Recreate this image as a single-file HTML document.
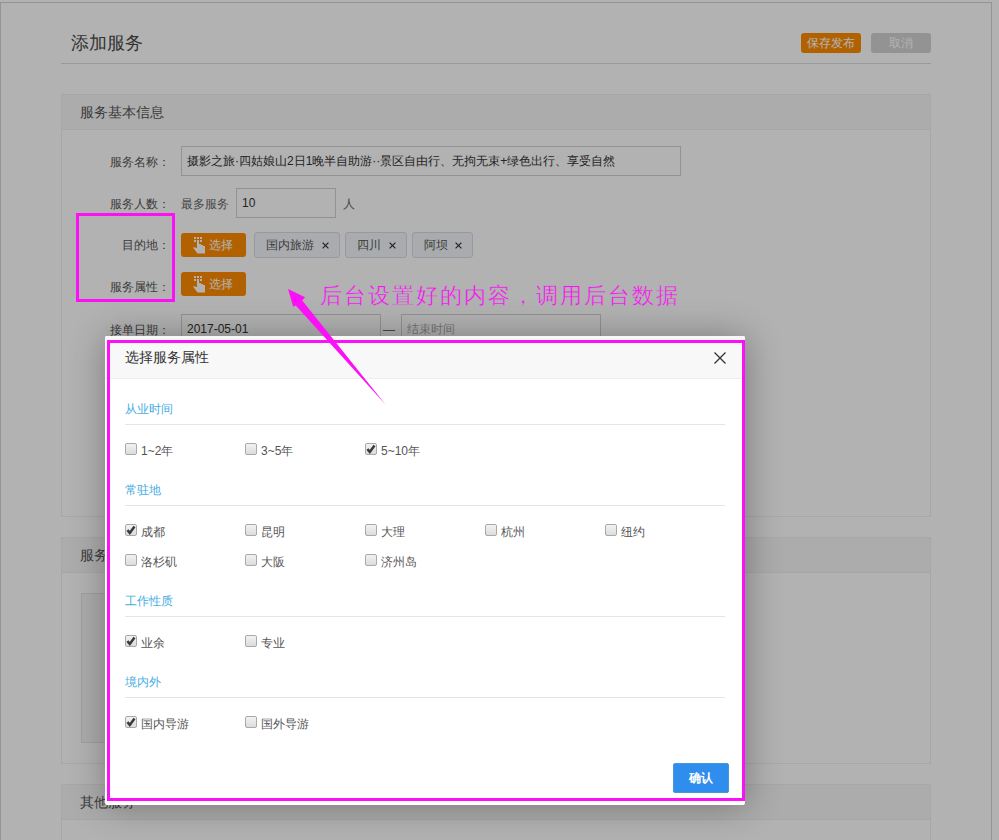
<!DOCTYPE html>
<html><head><meta charset="utf-8">
<style>
*{box-sizing:border-box;margin:0;padding:0}
html,body{width:999px;height:840px;overflow:hidden;background:#fff;font-family:"Liberation Sans",sans-serif;font-size:12px;color:#333;position:relative}
.a{position:absolute;white-space:nowrap}
.frame{left:0;top:2px;width:992px;height:900px;border:1px solid #d4d4d4;border-bottom:none}
.title{left:71px;top:31px;font-size:18px;line-height:24px;color:#4a4a4a}
.hr{height:1px;background:#dcdcdc}
.btn{height:20px;line-height:20px;text-align:center;border-radius:3px;font-size:12px}
.panel{border:1px solid #efefef}
.phead{background:#f6f6f6;border-bottom:1px solid #eeeeee}
.ph{font-size:14px;color:#555;line-height:20px}
.lbl{font-size:12px;line-height:16px;color:#555;text-align:right}
.inp{border:1px solid #d2d2d2;background:#fff;font-size:12px;color:#333;line-height:28px;padding-left:5px}
.obtn{background:#ff8c00;color:#fff;border-radius:3px;height:24px}
.tag{background:#f2f5f9;border:1px solid #d7dde6;border-radius:3px;height:26px;line-height:24px;font-size:12px;color:#555;padding-left:11px}
.tag i{position:absolute;right:10px;top:9px;width:7px;height:7px}
.shade{left:0;top:0;width:999px;height:840px;background:rgba(0,0,0,.3)}
.modal{left:105px;top:336px;width:640px;height:469px;background:#fff;border-radius:2px;box-shadow:1px 1px 36px rgba(0,0,0,.32)}
.mhead{left:0;top:0;width:640px;height:43px;background:#f8f8f8;border-bottom:1px solid #eee;border-radius:2px 2px 0 0}
.mtitle{left:20px;top:11px;font-size:14px;line-height:20px;color:#333}
.sec{font-size:12px;color:#45ade3;line-height:16px}
.sline{height:1px;background:#e5e5e5;width:600px;left:20px}
.cb{width:12px;height:12px;border:1px solid #a9a9a9;border-radius:2px;background:linear-gradient(#f2f2f2,#dcdcdc)}
.cb.on::after{content:"";position:absolute;left:0;top:0;width:12px;height:12px}
.cl{font-size:12px;line-height:16px;color:#444}
.modal .cl{margin-top:2px;color:#555}
.mag{border:3px solid #fb10f7}
</style></head><body>
<div class="a frame"></div>
<div class="a title">添加服务</div>
<div class="a btn" style="left:801px;top:33px;width:60px;background:#ff8c00;color:#fff">保存发布</div>
<div class="a btn" style="left:871px;top:33px;width:60px;background:#d3d3d3;color:#fff">取消</div>
<div class="a hr" style="left:61px;top:63px;width:870px"></div>

<!-- panel 1 -->
<div class="a panel" style="left:61px;top:94px;width:870px;height:423px"></div>
<div class="a phead" style="left:62px;top:95px;width:868px;height:35px"></div>
<div class="a ph" style="left:80px;top:102px">服务基本信息</div>

<div class="a lbl" style="left:100px;top:154px;width:70px">服务名称：</div>
<div class="a inp" style="left:181px;top:146px;width:500px;height:30px">摄影之旅·四姑娘山2日1晚半自助游··景区自由行、无拘无束+绿色出行、享受自然</div>

<div class="a lbl" style="left:100px;top:196px;width:70px">服务人数：</div>
<div class="a cl" style="left:181px;top:196px;color:#666">最多服务</div>
<div class="a inp" style="left:236px;top:188px;width:100px;height:30px">10</div>
<div class="a cl" style="left:343px;top:196px;color:#666">人</div>

<div class="a lbl" style="left:100px;top:237px;width:70px">目的地：</div>
<div class="a obtn" style="left:181px;top:233px;width:65px"><svg class="a" style="left:12px;top:4px" width="13" height="18" viewBox="0 0 13 18"><g fill="#fff"><rect x="1" y="0" width="2" height="2"/><rect x="4" y="0" width="2" height="2"/><rect x="7" y="0" width="2" height="2"/><rect x="1" y="3" width="2" height="2"/><rect x="7" y="3" width="2" height="2"/><path d="M4 3H6V7H8V8H10V9H12V16.6H4.5L0 10.5L1 10.2L4 11Z"/></g></svg></div>
<div class="a cl" style="left:209px;top:237px;color:#fff">选择</div>
<div class="a tag" style="left:254px;top:232px;width:86px">国内旅游<i><svg width="7" height="7" viewBox="0 0 7 7" style="display:block"><path d="M0.6 0.6L6.4 6.4M6.4 0.6L0.6 6.4" stroke="#333" stroke-width="1.2"/></svg></i></div>
<div class="a tag" style="left:345px;top:232px;width:62px">四川<i><svg width="7" height="7" viewBox="0 0 7 7" style="display:block"><path d="M0.6 0.6L6.4 6.4M6.4 0.6L0.6 6.4" stroke="#333" stroke-width="1.2"/></svg></i></div>
<div class="a tag" style="left:412px;top:232px;width:61px">阿坝<i><svg width="7" height="7" viewBox="0 0 7 7" style="display:block"><path d="M0.6 0.6L6.4 6.4M6.4 0.6L0.6 6.4" stroke="#333" stroke-width="1.2"/></svg></i></div>

<div class="a lbl" style="left:100px;top:279px;width:70px">服务属性：</div>
<div class="a obtn" style="left:181px;top:272px;width:65px"><svg class="a" style="left:12px;top:4px" width="13" height="18" viewBox="0 0 13 18"><g fill="#fff"><rect x="1" y="0" width="2" height="2"/><rect x="4" y="0" width="2" height="2"/><rect x="7" y="0" width="2" height="2"/><rect x="1" y="3" width="2" height="2"/><rect x="7" y="3" width="2" height="2"/><path d="M4 3H6V7H8V8H10V9H12V16.6H4.5L0 10.5L1 10.2L4 11Z"/></g></svg></div>
<div class="a cl" style="left:209px;top:276px;color:#fff">选择</div>

<div class="a lbl" style="left:100px;top:322px;width:70px">接单日期：</div>
<div class="a inp" style="left:181px;top:314px;width:200px;height:30px">2017-05-01</div>
<div class="a cl" style="left:383px;top:322px;color:#666">—</div>
<div class="a inp" style="left:401px;top:314px;width:200px;height:30px;color:#aaa">结束时间</div>

<!-- panel 2 -->
<div class="a panel" style="left:61px;top:537px;width:870px;height:227px"></div>
<div class="a phead" style="left:62px;top:538px;width:868px;height:35px"></div>
<div class="a ph" style="left:80px;top:545px">服务介绍</div>
<div class="a" style="left:81px;top:593px;width:600px;height:150px;border:1px solid #e6e6e6;background:#f6f6f6"></div>

<!-- panel 3 -->
<div class="a panel" style="left:61px;top:784px;width:870px;height:100px"></div>
<div class="a phead" style="left:62px;top:785px;width:868px;height:35px"></div>
<div class="a ph" style="left:80px;top:792px">其他服务</div>

<div class="a shade"></div>

<!-- modal -->
<div class="a modal">
  <div class="a mhead"></div>
  <div class="a mtitle">选择服务属性</div>
  <svg class="a" style="left:609px;top:16px" width="12" height="12" viewBox="0 0 12 12"><path d="M0.5 0.5L11.5 11.5M11.5 0.5L0.5 11.5" stroke="#333" stroke-width="1.25"/></svg>
  <div class="a sec" style="left:20px;top:65px">从业时间</div>
  <div class="a sline" style="top:88px"></div>
  <div class="a cb" style="left:20px;top:107px"></div>
  <div class="a cl" style="left:36px;top:105px">1~2年</div>
  <div class="a cb" style="left:140px;top:107px"></div>
  <div class="a cl" style="left:156px;top:105px">3~5年</div>
  <div class="a cb on" style="left:260px;top:107px"><svg width="12" height="12" viewBox="0 0 12 12" style="position:absolute;left:-1px;top:-1px"><path d="M2.4 6.2L4.8 8.9L9.5 2.6" fill="none" stroke="#3a3a3a" stroke-width="2.5"/></svg></div>
  <div class="a cl" style="left:276px;top:105px">5~10年</div>
  <div class="a sec" style="left:20px;top:146px">常驻地</div>
  <div class="a sline" style="top:169px"></div>
  <div class="a cb on" style="left:20px;top:188px"><svg width="12" height="12" viewBox="0 0 12 12" style="position:absolute;left:-1px;top:-1px"><path d="M2.4 6.2L4.8 8.9L9.5 2.6" fill="none" stroke="#3a3a3a" stroke-width="2.5"/></svg></div>
  <div class="a cl" style="left:36px;top:186px">成都</div>
  <div class="a cb" style="left:140px;top:188px"></div>
  <div class="a cl" style="left:156px;top:186px">昆明</div>
  <div class="a cb" style="left:260px;top:188px"></div>
  <div class="a cl" style="left:276px;top:186px">大理</div>
  <div class="a cb" style="left:380px;top:188px"></div>
  <div class="a cl" style="left:396px;top:186px">杭州</div>
  <div class="a cb" style="left:500px;top:188px"></div>
  <div class="a cl" style="left:516px;top:186px">纽约</div>
  <div class="a cb" style="left:20px;top:218px"></div>
  <div class="a cl" style="left:36px;top:216px">洛杉矶</div>
  <div class="a cb" style="left:140px;top:218px"></div>
  <div class="a cl" style="left:156px;top:216px">大阪</div>
  <div class="a cb" style="left:260px;top:218px"></div>
  <div class="a cl" style="left:276px;top:216px">济州岛</div>
  <div class="a sec" style="left:20px;top:257px">工作性质</div>
  <div class="a sline" style="top:280px"></div>
  <div class="a cb on" style="left:20px;top:299px"><svg width="12" height="12" viewBox="0 0 12 12" style="position:absolute;left:-1px;top:-1px"><path d="M2.4 6.2L4.8 8.9L9.5 2.6" fill="none" stroke="#3a3a3a" stroke-width="2.5"/></svg></div>
  <div class="a cl" style="left:36px;top:297px">业余</div>
  <div class="a cb" style="left:140px;top:299px"></div>
  <div class="a cl" style="left:156px;top:297px">专业</div>
  <div class="a sec" style="left:20px;top:338px">境内外</div>
  <div class="a sline" style="top:361px"></div>
  <div class="a cb on" style="left:20px;top:380px"><svg width="12" height="12" viewBox="0 0 12 12" style="position:absolute;left:-1px;top:-1px"><path d="M2.4 6.2L4.8 8.9L9.5 2.6" fill="none" stroke="#3a3a3a" stroke-width="2.5"/></svg></div>
  <div class="a cl" style="left:36px;top:378px">国内导游</div>
  <div class="a cb" style="left:140px;top:380px"></div>
  <div class="a cl" style="left:156px;top:378px">国外导游</div>
  <div class="a" style="left:568px;top:427px;width:56px;height:30px;background:#2e8ded;border:1px solid #4898d5;border-radius:2px;color:#fff;font-weight:bold;text-align:center;line-height:28px">确认</div>
</div>


<!-- annotations -->
<div class="a mag" style="left:76px;top:213px;width:99px;height:89px"></div>
<div class="a mag" style="left:107px;top:340px;width:638px;height:461px"></div>
<div class="a" style="left:320px;top:281px;font-size:22px;letter-spacing:2px;line-height:30px;color:#fb10f7;-webkit-text-stroke:0.35px #b3b3b3;paint-order:normal">后台设置好的内容，调用后台数据</div>
<svg class="a" style="left:0;top:0" width="999" height="840"><path d="M288 289L305.1 297.3L302.2 300.6L385.7 404.8L295.8 305.4L293.2 306.8Z" fill="#fb10f7"/></svg>
</body></html>
